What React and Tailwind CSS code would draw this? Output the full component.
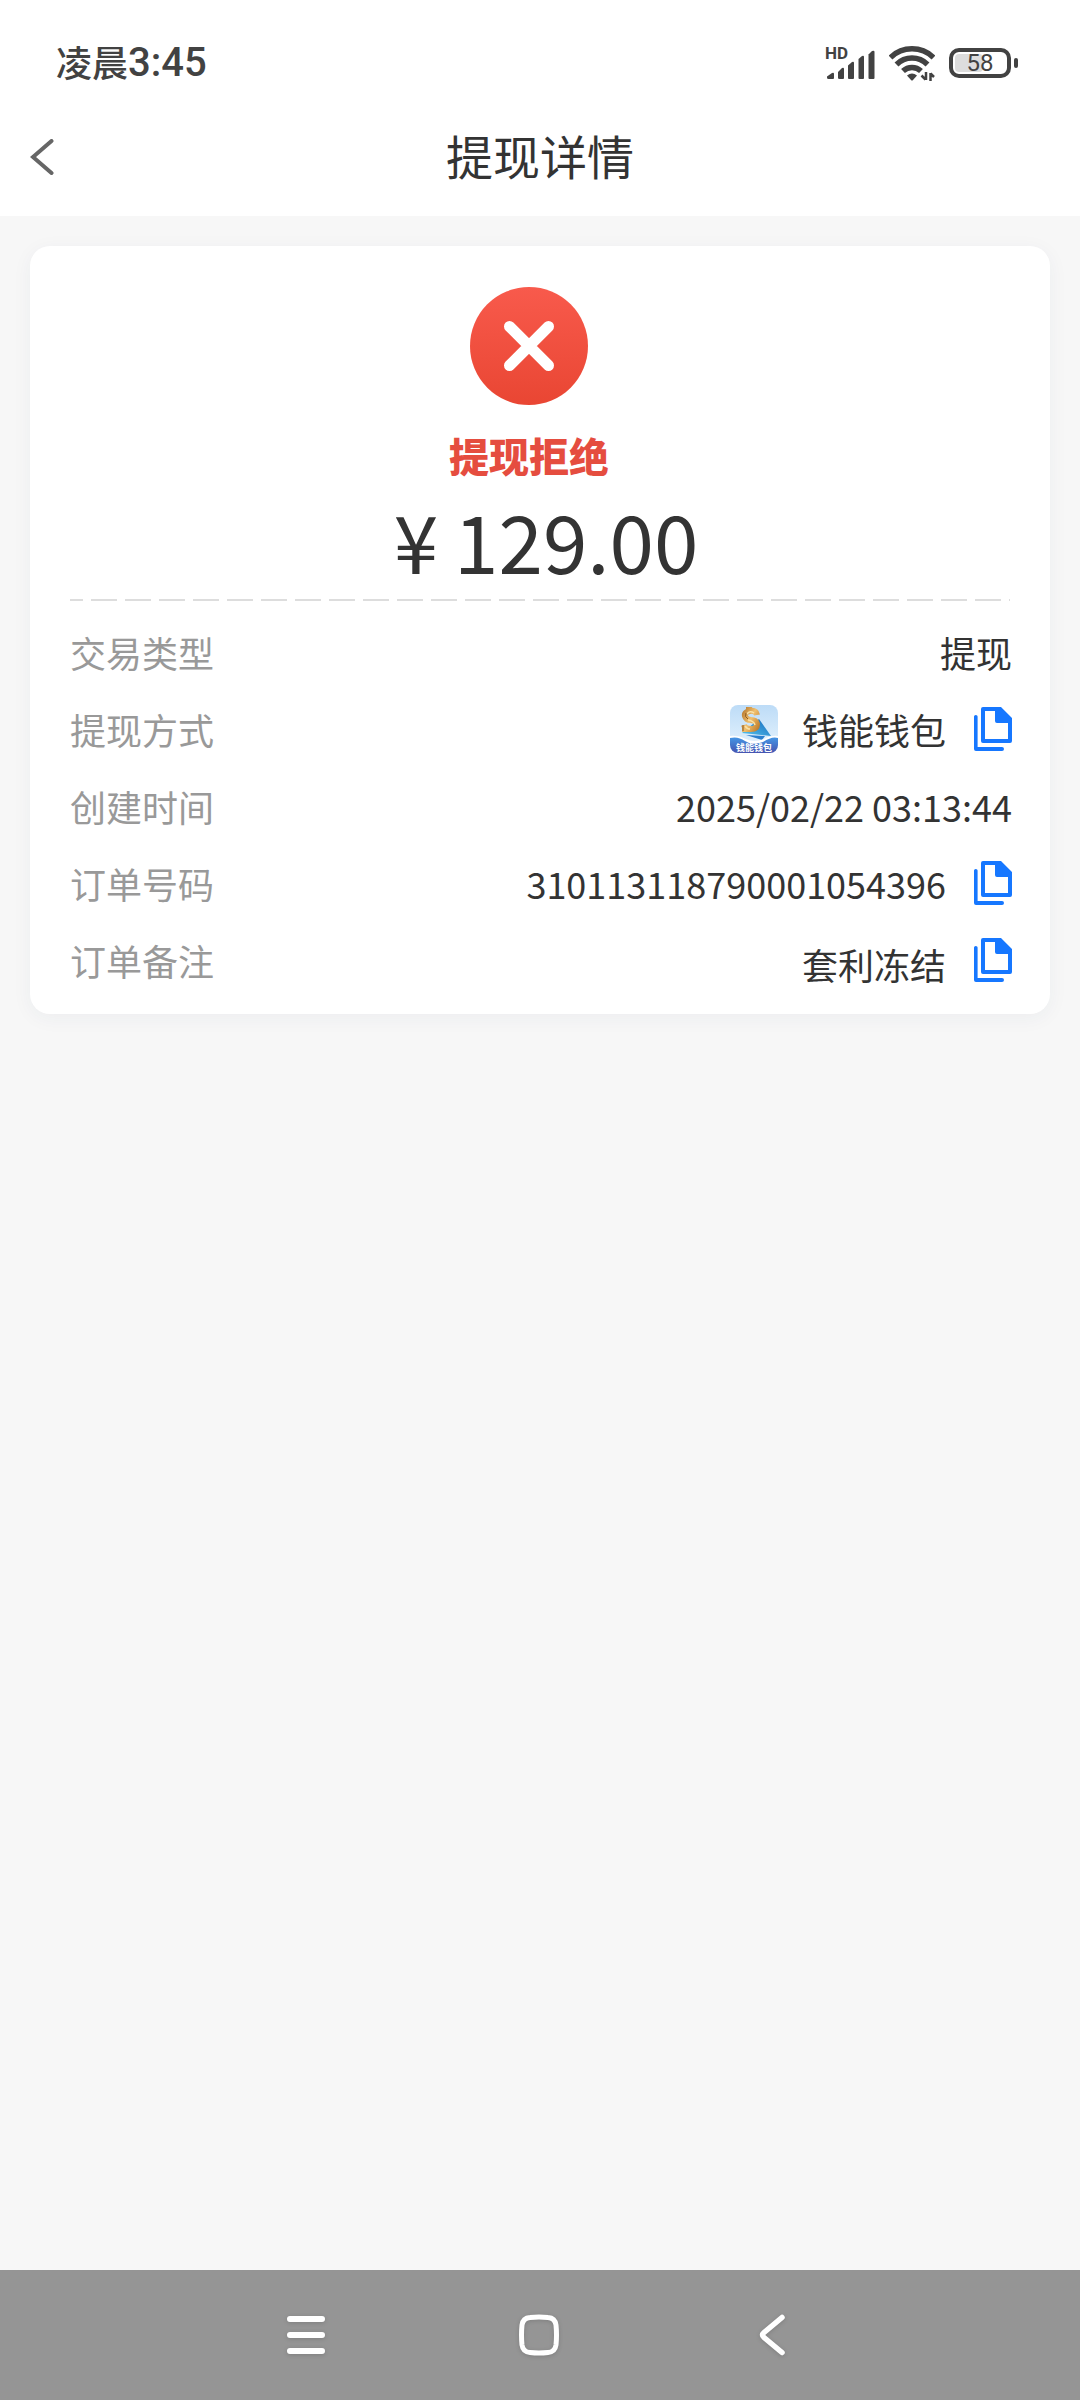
// App.jsx
const FONT = "font-['Noto_Sans_CJK_SC',sans-serif]";

// --- Iconos de la barra de estado ---
function SignalIcon() {
  return (
    <div className="relative h-9 w-[50px]">
      <span className="absolute left-0 top-0 font-['Roboto',sans-serif] text-[17px] leading-4 font-bold">HD</span>
      <svg className="h-9 w-[50px]" viewBox="0 0 50 36" fill="currentColor">
        <path d="M2 31.5 7 28Q9 27 9 29V33Q9 34 8 34H3.500Q2 34 2 32.500Z" />
        <path d="M13 27 17 23Q19 22 19 24V33Q19 34 18 34H14.500Q13 34 13 33Z" />
        <path d="M23 20.500 27 17Q29 16 29 18V33Q29 34 28 34H24Q23 34 23 33Z" />
        <path d="M33.500 14 37 11Q39 10 39 12V33Q39 34 38 34H34.500Q33.500 34 33.500 33Z" />
        <path d="M43.500 9.500 47 6Q49.500 5 49.500 7V33Q49.500 34 48.500 34H44.500Q43.500 34 43.500 33Z" />
      </svg>
    </div>
  );
}

function WifiIcon() {
  return (
    <svg className="h-9 w-[46px]" viewBox="0 0 46 36" fill="none" stroke="currentColor" strokeWidth="5.500">
      <path d="M1.500 12.500A31 31 0 0 1 44.500 12.500" />
      <path d="M7.500 19.500A22 22 0 0 1 38.500 19.500" />
      <path d="M14 26A13 13 0 0 1 32 26" />
      <path d="M18 30.500Q23 26.500 28 30.500L24 35Q23 36 22 35Z" fill="currentColor" stroke="none" />
      <path d="M37 27V35M36.500 34.500 32.500 30.500M41.500 36V28M41.500 28.500 45 32" strokeWidth="2.500" />
    </svg>
  );
}

function Battery({ level }) {
  return (
    <div className="flex items-center gap-[3px]">
      <div className="relative flex h-[30px] w-[62px] items-center justify-center rounded-[10px] border-4 border-[#424242]">
        <div className="absolute inset-y-[2px] left-[2px] w-[28px] rounded-[4px] bg-[#dddddd]" />
        <span className="relative font-['Roboto',sans-serif] text-[24px] leading-6">{level}</span>
      </div>
      <div className="h-[10px] w-1 rounded-sm bg-[#424242]" />
    </div>
  );
}

// --- Logo de la cartera ---
function WalletLogo() {
  return (
    <svg className="size-12 rounded-lg" viewBox="0 0 48 48">
      <defs>
        <linearGradient id="sky" x1="0" y1="0" x2="0" y2="1">
          <stop offset="0" stopColor="#bddcf7" />
          <stop offset="1" stopColor="#e9f5fe" />
        </linearGradient>
        <linearGradient id="gold" x1="0" y1="0" x2="1" y2="1">
          <stop offset="0" stopColor="#b87a30" />
          <stop offset="0.5" stopColor="#f0c070" />
          <stop offset="1" stopColor="#c07d2c" />
        </linearGradient>
        <linearGradient id="sail" x1="0" y1="1" x2="1" y2="0">
          <stop offset="0" stopColor="#55c5ed" />
          <stop offset="1" stopColor="#1768bd" />
        </linearGradient>
        <linearGradient id="sea" x1="0" y1="0" x2="0" y2="1">
          <stop offset="0" stopColor="#4596e5" />
          <stop offset="1" stopColor="#4653b0" />
        </linearGradient>
      </defs>
      <rect width="48" height="48" fill="url(#sky)" />
      <path d="M29 14 41 31 12 28Z" fill="url(#sail)" />
      <path d="M16 30 35 31 32 35Z" fill="#2b7fce" />
      <path
        d="M27 10Q26 5 20 6T15 11Q16 15 21 15T27 19Q27 24 21 24T14 20M19 2V6M23 4V7M15 22V27"
        fill="none"
        stroke="url(#gold)"
        strokeWidth="6"
      />
      <path d="M17 9Q20 5 24 8M18 15Q24 16 25 20M15 21Q17 24 20 24" fill="none" stroke="#fae2a7" strokeWidth="1.500" />
      <path d="M16 8Q14 12 18 14M13 20V26" fill="none" stroke="#8e5a20" strokeWidth="1" />
      <path d="M0 31Q8 30 16 34T34 34Q42 30 48 31V48H0Z" fill="#ffffff" />
      <path d="M0 33Q8 31 15 36T33 37Q42 31 48 33V48H0Z" fill="url(#sea)" />
      <text x="24" y="46" textAnchor="middle" fontSize="9" fontWeight="700" fill="#ffffff">
        钱能钱包
      </text>
    </svg>
  );
}

function CopyButton({ label }) {
  return (
    <button type="button" aria-label={label} className="text-[#1677ff]">
      <svg className="h-11 w-[38px]" viewBox="0 0 38 44" fill="currentColor">
        <path
          fillRule="evenodd"
          d="M9 0H27L38 11V34Q38 36 36 36H9Q7 36 7 34V2Q7 0 9 0ZM11 4V32H34V16H23Q21 16 21 14V4Z"
        />
        <path d="M0 9.500Q0 8 1.800 8T3.600 9.500V40H28Q30 40 30 42T28 44H2Q0 44 0 42Z" />
      </svg>
    </button>
  );
}

function Row({ label, children, align = 'items-center' }) {
  return (
    <div className="flex h-[77px] items-center justify-between">
      <dt className="text-[#999999]">{label}</dt>
      <dd className={`flex gap-7 ${align}`}>{children}</dd>
    </div>
  );
}

function App() {
  return (
    <div className={`flex min-h-screen flex-col bg-[#f7f7f7] text-[36px] leading-9 text-[#333333] ${FONT}`}>
      {/* --- Barra de estado --- */}
      <div className="flex h-[98px] items-center justify-between bg-white pt-7 pr-[62px] pl-14 text-[#424242]">
        <div className="flex items-start font-medium">
          <span>凌晨</span>
          <span className="font-['Roboto',sans-serif] text-[40px] leading-10">3:45</span>
        </div>
        <div className="flex items-center gap-[14px]">
          <SignalIcon />
          <WifiIcon />
          <Battery level={58} />
        </div>
      </div>

      {/* --- Cabecera --- */}
      <header className="relative flex h-[118px] items-center justify-center bg-white">
        <button type="button" aria-label="返回" className="absolute left-[30px] text-[#666666]">
          <svg className="h-9 w-6" viewBox="0 0 24 36" fill="none" stroke="currentColor" strokeWidth="4" strokeLinecap="round">
            <path d="M21.500 2 3 18 21.500 34" />
          </svg>
        </button>
        <h1 className="pb-1 text-[47px] leading-[48px]">提现详情</h1>
      </header>

      <main className="flex-1 p-[30px]">
        <section className="rounded-[20px] bg-white px-10 pt-[41px] shadow-[0_4px_20px_rgba(30,60,90,0.05)]">
          <div className="flex flex-col items-center">
            <div className="flex flex-col items-center pr-[22px]">
              <svg className="size-[118px]" viewBox="0 0 118 118">
                <defs>
                  <linearGradient id="rejected" x1="0" y1="0" x2="0" y2="1">
                    <stop offset="0" stopColor="#f85a4c" />
                    <stop offset="1" stopColor="#e94633" />
                  </linearGradient>
                </defs>
                <circle cx="59" cy="59" r="59" fill="url(#rejected)" />
                <path d="M39.500 39.500 78.500 78.500M78.500 39.500 39.500 78.500" stroke="#ffffff" strokeWidth="11" strokeLinecap="round" />
              </svg>
              <p className="mt-[30px] text-[40px] leading-10 font-black text-[#e54d3f]">提现拒绝</p>
            </div>
            <p className="mt-6 flex gap-4 pl-3 text-[80px] leading-[80px]">
              <span>¥</span>
              <span>129.00</span>
            </p>
          </div>

          <div className="mt-5 h-[2px] bg-[linear-gradient(to_right,#dddddd_26px,transparent_26px)] bg-[length:34px_2px] bg-[position:-13px_0]" />

          <dl className="-mr-[2px] pt-3 pb-4">
            <Row label="交易类型">提现</Row>
            <Row label="提现方式">
              <span className="flex items-center gap-6">
                <WalletLogo />
                钱能钱包
              </span>
              <CopyButton label="复制提现方式" />
            </Row>
            <Row label="创建时间">2025/02/22 03:13:44</Row>
            <Row label="订单号码">
              310113118790001054396
              <CopyButton label="复制订单号码" />
            </Row>
            <Row label="订单备注" align="items-end">
              套利冻结
              <CopyButton label="复制订单备注" />
            </Row>
          </dl>
        </section>
      </main>

      {/* --- Barra de navegación --- */}
      <nav className="flex h-[130px] items-center justify-center bg-[#959595] text-white">
        <button type="button" aria-label="菜单" className="flex w-[233px] justify-center">
          <svg className="size-[42px] drop-shadow-sm" viewBox="0 0 42 42" fill="none" stroke="currentColor" strokeWidth="6" strokeLinecap="round">
            <path d="M4 5H36M4 21H36M4 37H36" />
          </svg>
        </button>
        <button type="button" aria-label="主页" className="flex w-[233px] justify-center">
          <svg className="size-[42px] drop-shadow-sm" viewBox="0 0 42 42" fill="none" stroke="currentColor" strokeWidth="5">
            <path d="M11 3.500Q20 2.500 29 3.500Q36 4 37 11Q38 21 37 31Q36 38 29 38.500Q20 39.500 11 38.500Q4 38 3 31Q2 21 3 11Q4 4 11 3.500Z" />
          </svg>
        </button>
        <button type="button" aria-label="后退" className="flex w-[233px] justify-center">
          <svg className="size-[42px] drop-shadow-sm" viewBox="0 0 42 42" fill="none" stroke="currentColor" strokeWidth="5.500" strokeLinecap="round">
            <path d="M30 3.500 12 18.500Q9 21 12 23.500L30 38.500" />
          </svg>
        </button>
      </nav>
    </div>
  );
}

export default App;
